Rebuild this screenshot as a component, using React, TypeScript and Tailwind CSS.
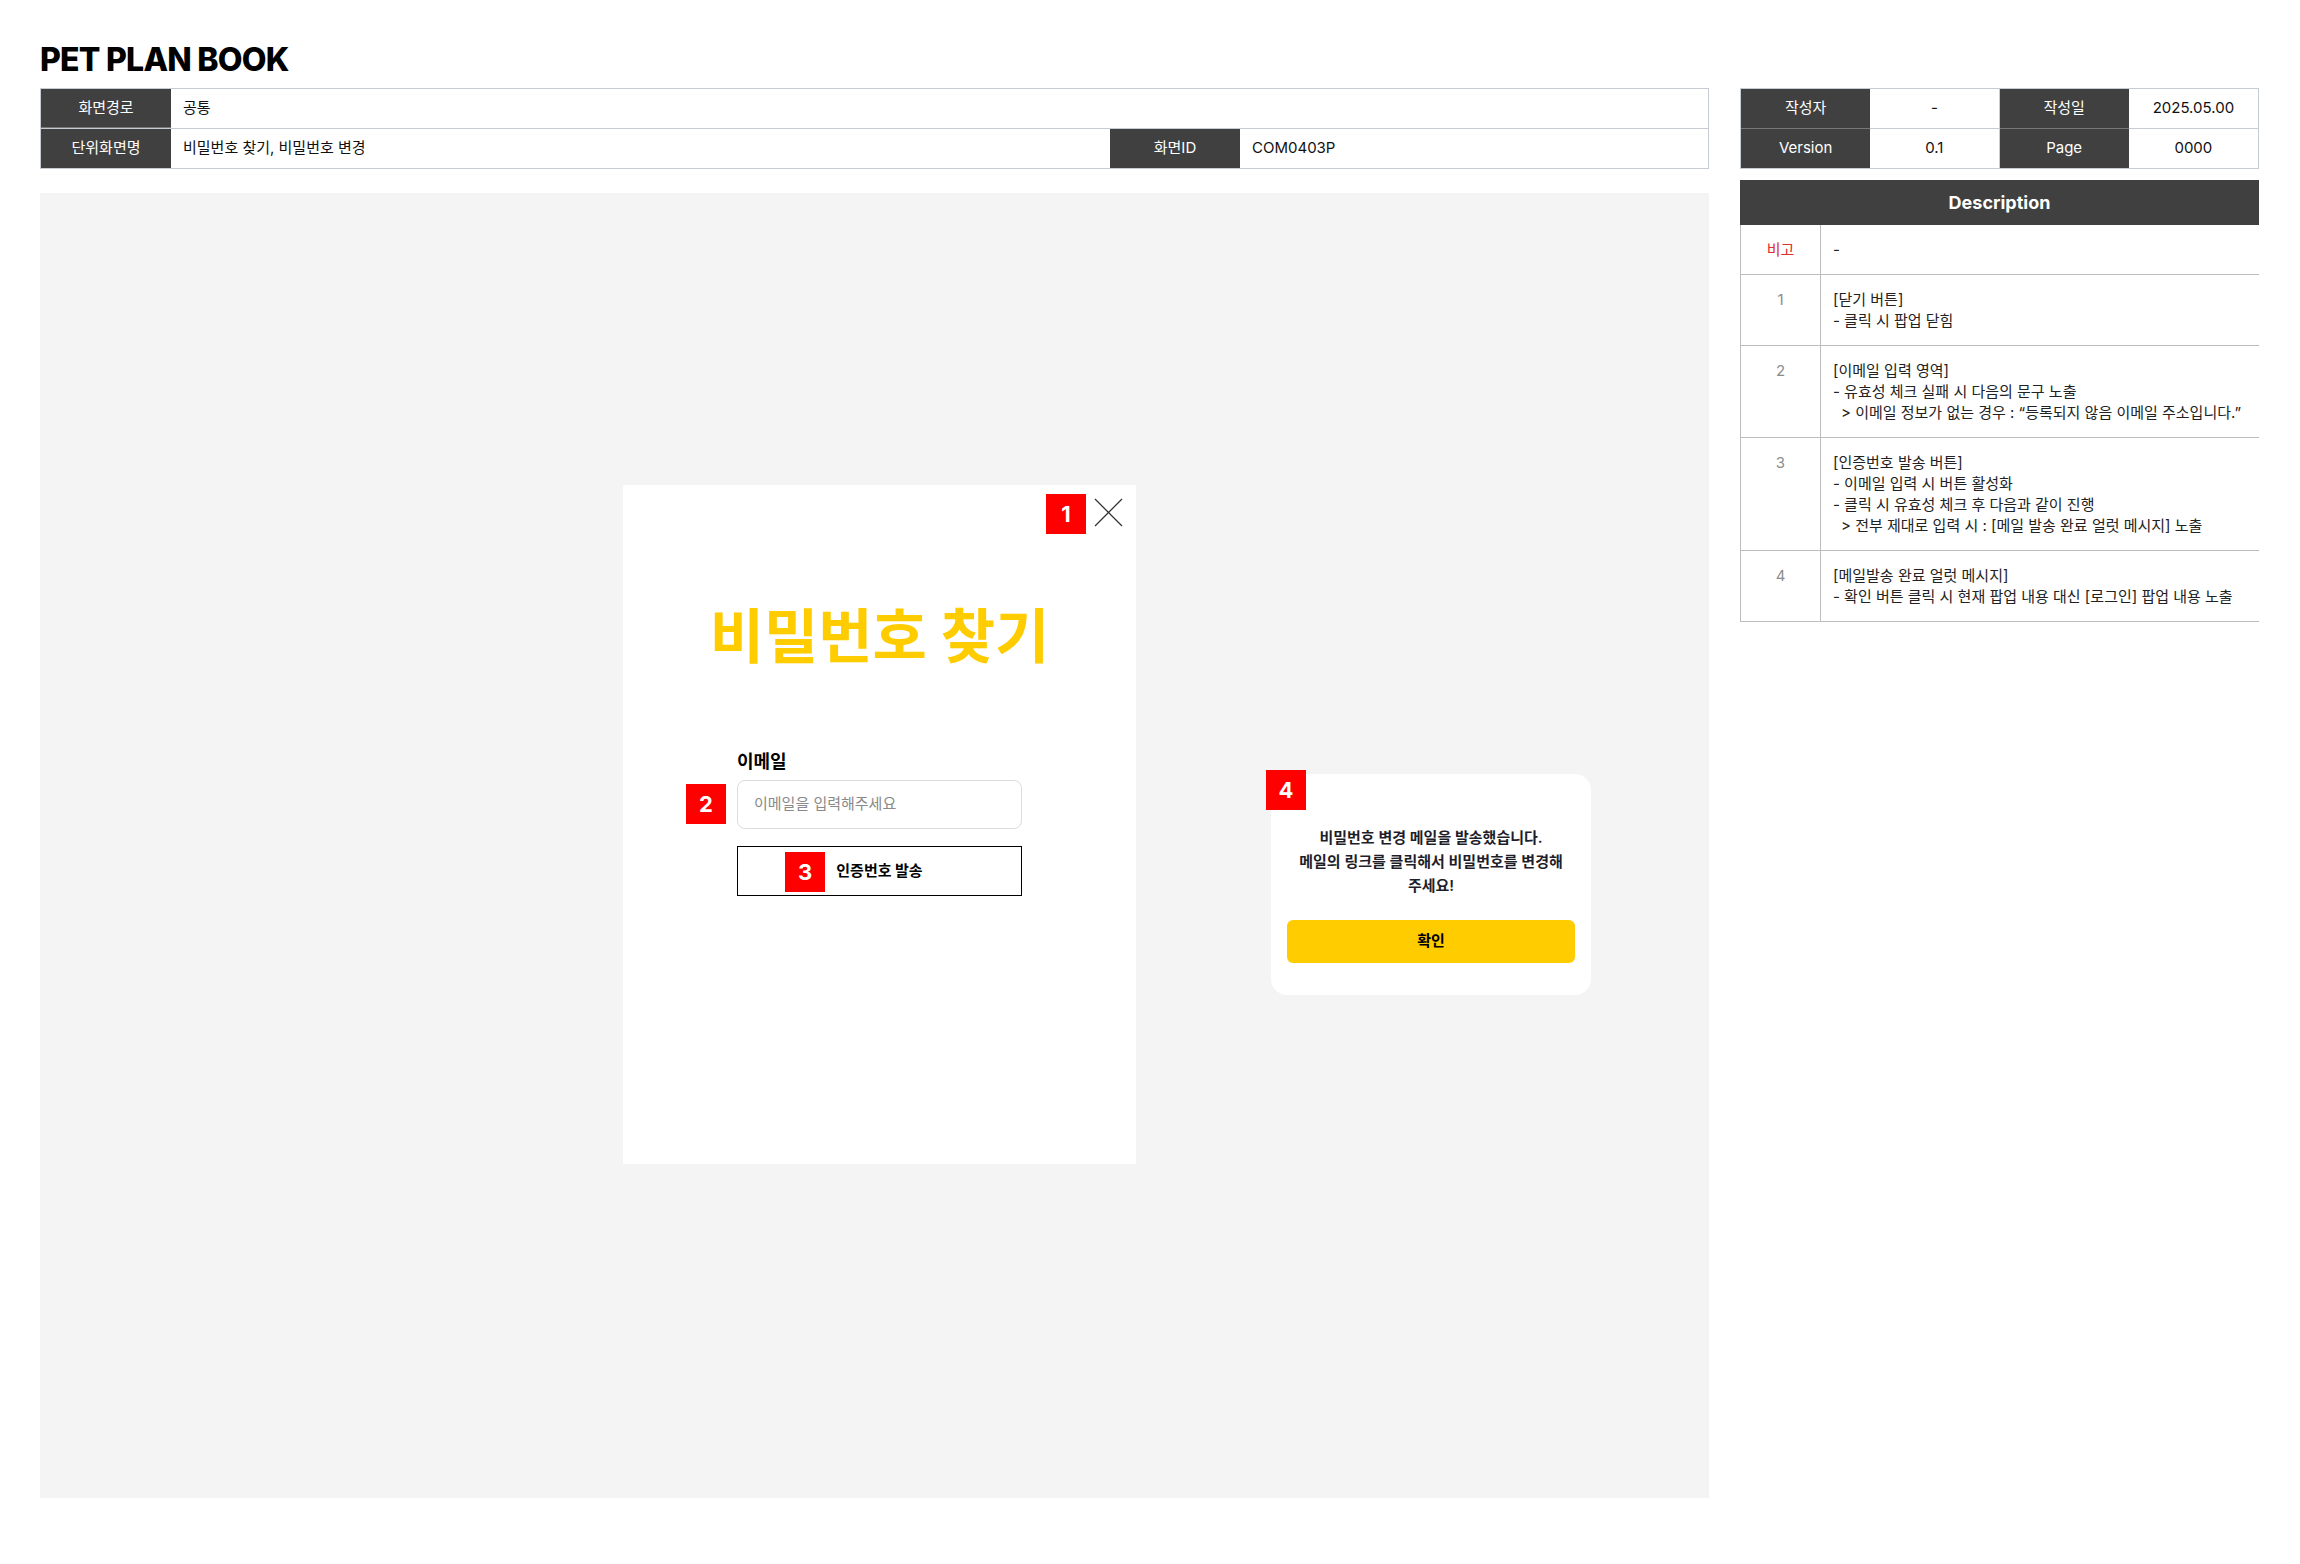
import React from "react";

const Badge = ({ n }: { n: string }) => (
  <span className="flex h-[40px] w-[40px] items-center justify-center bg-[#ff0000] text-[22px] font-bold leading-none text-white">
    {n}
  </span>
);

const descRows = [
  { n: "1", lines: ["[닫기 버튼]", "- 클릭 시 팝업 닫힘"] },
  {
    n: "2",
    lines: [
      "[이메일 입력 영역]",
      "- 유효성 체크 실패 시 다음의 문구 노출",
      "> 이메일 정보가 없는 경우 : “등록되지 않음 이메일 주소입니다.”",
    ],
  },
  {
    n: "3",
    lines: [
      "[인증번호 발송 버튼]",
      "- 이메일 입력 시 버튼 활성화",
      "- 클릭 시 유효성 체크 후 다음과 같이 진행",
      "> 전부 제대로 입력 시 : [메일 발송 완료 얼럿 메시지] 노출",
    ],
  },
  { n: "4", lines: ["[메일발송 완료 얼럿 메시지]", "- 확인 버튼 클릭 시 현재 팝업 내용 대신 [로그인] 팝업 내용 노출"] },
];

function InfoTable() {
  return (
    <div className="border border-[#c7cbd3] text-[15px]">
      <div className="flex h-[40px] border-b border-[#c7cbd3]">
        <div className="flex w-[130px] items-center justify-center border-b border-[#777] bg-[#404040] text-white">화면경로</div>
        <div className="flex flex-1 items-center pl-[12px]">공통</div>
      </div>
      <div className="flex h-[39px]">
        <div className="flex w-[130px] items-center justify-center bg-[#404040] text-white">단위화면명</div>
        <div className="flex w-[939px] items-center pl-[12px]">비밀번호 찾기, 비밀번호 변경</div>
        <div className="flex w-[130px] items-center justify-center bg-[#404040] text-white">화면ID</div>
        <div className="flex flex-1 items-center pl-[12px]">COM0403P</div>
      </div>
    </div>
  );
}

function MetaTable() {
  const head = "flex items-center justify-center bg-[#404040] text-white";
  const val = "flex items-center justify-center bg-white";
  return (
    <div className="grid h-[81px] grid-cols-4 grid-rows-2 border border-[#c7cbd3] text-[15px]">
      <div className={`${head} border-b border-[#777]`}>작성자</div>
      <div className={`${val} border-b border-r border-[#c7cbd3]`}>-</div>
      <div className={`${head} border-b border-[#777]`}>작성일</div>
      <div className={`${val} border-b border-[#c7cbd3]`}>2025.05.00</div>
      <div className={head}>Version</div>
      <div className={`${val} border-r border-[#c7cbd3]`}>0.1</div>
      <div className={head}>Page</div>
      <div className={val}>0000</div>
    </div>
  );
}

function DescTable() {
  return (
    <div className="mt-[11px] text-[15px]">
      <div className="flex h-[45px] items-center justify-center bg-[#404040] text-[18px] font-bold text-white">Description</div>
      <div className="grid grid-cols-[80px_1fr] border-b border-l border-[#bdbdbd]">
        <div className="border-r border-[#bdbdbd] py-[14px] text-center leading-[21px] text-[#e02d2d]">비고</div>
        <div className="py-[14px] pl-[12px] leading-[21px] text-[#222]">-</div>
      </div>
      {descRows.map((r) => (
        <div key={r.n} className="grid grid-cols-[80px_1fr] border-b border-l border-[#bdbdbd]">
          <div className="border-r border-[#bdbdbd] py-[14px] text-center leading-[21px] text-[#8c8c8c]">{r.n}</div>
          <div className="py-[14px] pl-[12px] leading-[21px] text-[#222]">
            {r.lines.map((l) => (
              <div key={l} className={l.startsWith(">") ? "pl-[8px]" : ""}>
                {l}
              </div>
            ))}
          </div>
        </div>
      ))}
    </div>
  );
}

function FindPasswordPopup() {
  return (
    <div className="flex h-[679px] w-[513px] flex-col bg-white">
      <div className="flex items-start justify-end gap-[8px] pr-[13px] pt-[9px]">
        <Badge n="1" />
        <svg className="mt-[4px]" width="29" height="29" viewBox="0 0 29 29" fill="none" stroke="#333" strokeWidth="1.3">
          <path d="M1 1L28 28M28 1L1 28" />
        </svg>
      </div>
      <h2 className="mt-[73px] text-center text-[59px] font-bold leading-none text-[#ffcc00]">비밀번호 찾기</h2>
      <div className="mx-auto mt-[86px] w-[285px]">
        <div className="text-[18px] font-bold leading-[20px] text-black">이메일</div>
        <div className="relative mt-[8px]">
          <div className="absolute -left-[51px] top-[4px]">
            <Badge n="2" />
          </div>
          <div className="flex h-[49px] items-center rounded-[8px] border border-[#dcdcdc] px-[16px] text-[15px] text-[#8a8a8a]">
            이메일을 입력해주세요
          </div>
        </div>
        <button className="relative mt-[17px] flex h-[50px] w-full items-center justify-center border-[1.5px] border-black bg-white text-[15px] font-bold text-black">
          <span className="absolute left-[47px] top-[5px]">
            <Badge n="3" />
          </span>
          인증번호 발송
        </button>
      </div>
    </div>
  );
}

function MailSentAlert() {
  return (
    <div className="relative ml-[135px] mt-[289px] w-[320px] rounded-[16px] bg-white px-[16px] pb-[32px] pt-[52px]">
      <span className="absolute -left-[5px] -top-[4px]">
        <Badge n="4" />
      </span>
      <p className="text-center text-[15px] font-semibold leading-[24px] text-[#1e1e2a]">
        비밀번호 변경 메일을 발송했습니다.
        <br />
        메일의 링크를 클릭해서 비밀번호를 변경해
        <br />
        주세요!
      </p>
      <button className="mt-[22px] h-[43px] w-full rounded-[6px] bg-[#ffcc00] text-[15px] font-bold text-black">확인</button>
    </div>
  );
}

export default function App() {
  return (
    <div className="min-h-screen w-[2300px] bg-white font-[Inter,'Noto_Sans_CJK_KR',sans-serif] text-[#111]">
      <div className="px-[40px] pt-[44px]">
        <h1 className="text-[32px] font-extrabold leading-none tracking-[-0.024em] text-black">PET PLAN BOOK</h1>
        <div className="mt-[12px] flex gap-[31px]">
          <div className="w-[1669px]">
            <InfoTable />
            <div className="mt-[24px] flex h-[1305px] items-start bg-[#f4f4f4] pl-[583px] pt-[292px]">
              <FindPasswordPopup />
              <MailSentAlert />
            </div>
          </div>
          <div className="w-[519px]">
            <MetaTable />
            <DescTable />
          </div>
        </div>
      </div>
    </div>
  );
}
